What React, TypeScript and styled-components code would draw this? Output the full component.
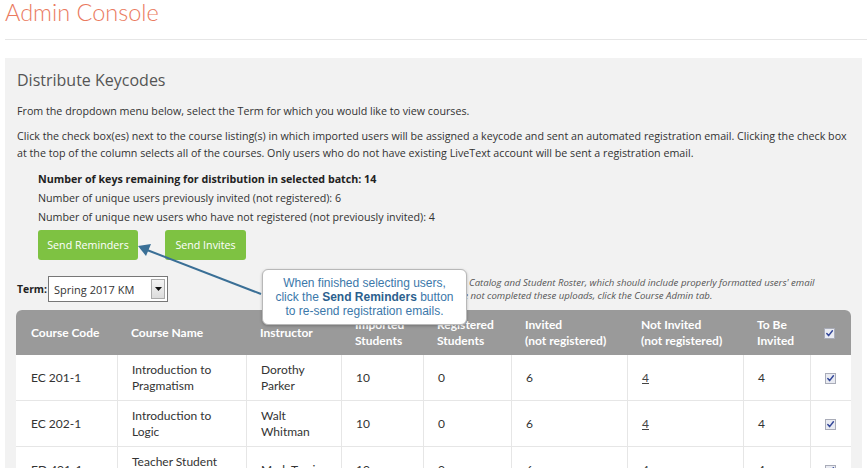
import styled, { createGlobalStyle } from "styled-components";

const GlobalStyle = createGlobalStyle`
  html, body {
    margin: 0;
    padding: 0;
    background: #ffffff;
    overflow: hidden;
  }
  body {
    font-family: "Open Sans", "Liberation Sans", sans-serif;
    color: #333333;
  }
`;

interface CourseRow {
  code: string;
  name: string;
  instructor: string;
  imported: number;
  registered: number;
  invited: number;
  notInvited: number;
  toBeInvited: number;
}

const ROWS: CourseRow[] = [
  {
    code: "EC 201-1",
    name: "Introduction to Pragmatism",
    instructor: "Dorothy Parker",
    imported: 10,
    registered: 0,
    invited: 6,
    notInvited: 4,
    toBeInvited: 4,
  },
  {
    code: "EC 202-1",
    name: "Introduction to Logic",
    instructor: "Walt Whitman",
    imported: 10,
    registered: 0,
    invited: 6,
    notInvited: 4,
    toBeInvited: 4,
  },
  {
    code: "ED 401-1",
    name: "Teacher Student Teaching",
    instructor: "Mark Twain",
    imported: 10,
    registered: 0,
    invited: 6,
    notInvited: 4,
    toBeInvited: 4,
  },
];

const COLUMN_WIDTHS = [101, 129, 95, 82, 88, 116, 116, 67, 41];

function CheckMark() {
  return (
    <Check>
      <svg width="9" height="9" viewBox="0 0 9 9">
        <path
          d="M1.8 4.6 L3.6 6.6 L7.4 1.8"
          fill="none"
          stroke="#34489a"
          strokeWidth="1.5"
          strokeLinecap="round"
          strokeLinejoin="round"
        />
      </svg>
    </Check>
  );
}

export default function App(): JSX.Element {
  return (
    <Page>
      <GlobalStyle />
      <Title>Admin Console</Title>
      <Rule />
      <Panel>
        <Heading>Distribute Keycodes</Heading>
        <Text>
          From the dropdown menu below, select the Term for which you would like
          to view courses.
        </Text>
        <Text>
          Click the check box(es) next to the course listing(s) in which
          imported users will be assigned a keycode and sent an automated
          registration email. Clicking the check box
          <br />
          at the top of the column selects all of the courses. Only users who
          do not have existing LiveText account will be sent a registration
          email.
        </Text>
        <Stats>
          <StatLine $bold>
            Number of keys remaining for distribution in selected batch: 14
          </StatLine>
          <StatLine>
            Number of unique users previously invited (not registered): 6
          </StatLine>
          <StatLine>
            Number of unique new users who have not registered (not previously
            invited): 4
          </StatLine>
          <Buttons>
            <GreenButton $width={100}>Send Reminders</GreenButton>
            <GreenButton $width={81}>Send Invites</GreenButton>
          </Buttons>
        </Stats>
        <TermRow>
          <TermLabel>Term:</TermLabel>
          <TermSelect>
            <span>Spring 2017 KM</span>
            <SelectArrow>
              <svg width="7" height="4" viewBox="0 0 7 4">
                <path d="M0 0 L7 0 L3.5 4 Z" fill="#111" />
              </svg>
            </SelectArrow>
          </TermSelect>
          <Note>
            Prior to distributing, upload the Course Catalog and Student
            Roster, which should include properly formatted users' email
            <br />
            addresses for every student. If you have not completed these
            uploads, click the Course Admin tab.
          </Note>
        </TermRow>
        <Table>
          <colgroup>
            {COLUMN_WIDTHS.map((w, i) => (
              <col key={i} style={{ width: w }} />
            ))}
          </colgroup>
          <thead>
            <tr>
              <Th>Course Code</Th>
              <Th>Course Name</Th>
              <Th>Instructor</Th>
              <Th>
                Imported
                <br />
                Students
              </Th>
              <Th>
                Registered
                <br />
                Students
              </Th>
              <Th>
                Invited
                <br />
                (not registered)
              </Th>
              <Th>
                Not Invited
                <br />
                (not registered)
              </Th>
              <Th>
                To Be
                <br />
                Invited
              </Th>
              <Th>
                <CheckMark />
              </Th>
            </tr>
          </thead>
          <tbody>
            {ROWS.map((row) => (
              <tr key={row.code}>
                <Td>{row.code}</Td>
                <Td>{row.name}</Td>
                <Td>{row.instructor}</Td>
                <Td>{row.imported}</Td>
                <Td>{row.registered}</Td>
                <Td>{row.invited}</Td>
                <Td>
                  <CountLink>{row.notInvited}</CountLink>
                </Td>
                <Td>{row.toBeInvited}</Td>
                <Td>
                  <CheckMark />
                </Td>
              </tr>
            ))}
          </tbody>
        </Table>
      </Panel>

      <Callout>
        When finished selecting users,
        <br />
        click the <strong>Send Reminders</strong> button
        <br />
        to re-send registration emails.
      </Callout>
      <ArrowLayer width="867" height="468" viewBox="0 0 867 468">
        <line
          x1="261"
          y1="294"
          x2="147"
          y2="250"
          stroke="#3a6f96"
          strokeWidth="2"
        />
        <path d="M138 246 L151 244 L146 256 Z" fill="#3a6f96" />
      </ArrowLayer>
    </Page>
  );
}

const Page = styled.div`
  position: relative;
  width: 867px;
  height: 468px;
  overflow: hidden;
`;

const Title = styled.h1`
  margin: -2px 0 0 5px;
  font-family: Lato, "Open Sans", sans-serif;
  font-weight: 300;
  font-size: 23.5px;
  line-height: 28px;
  color: #ea7a60;
`;

const Rule = styled.div`
  margin: 13px 0 0 5px;
  height: 1px;
  background: #e6e6e6;
`;

const Panel = styled.section`
  margin: 18px 5px 0 5px;
  padding: 10px 11px 0 11px;
  background: #f2f2f2;
  height: 420px;
`;

const Heading = styled.h2`
  margin: 0 0 11px 1px;
  font-family: "Open Sans", sans-serif;
  font-weight: 400;
  font-size: 16px;
  line-height: 24px;
  color: #555555;
`;

const Text = styled.p`
  margin: 0 0 8px 1px;
  font-size: 10.7px;
  line-height: 17px;
  color: #333333;
  white-space: nowrap;
`;

const Stats = styled.div`
  margin: 7px 0 0 22px;
`;

const StatLine = styled.div<{ $bold?: boolean }>`
  font-size: 10.7px;
  line-height: 19px;
  font-weight: ${(p) => (p.$bold ? 700 : 400)};
  color: ${(p) => (p.$bold ? "#222" : "#333")};
`;

const Buttons = styled.div`
  display: flex;
  gap: 27px;
  margin-top: 3px;
`;

const GreenButton = styled.button<{ $width: number }>`
  width: ${(p) => p.$width}px;
  height: 30px;
  border: none;
  border-radius: 3px;
  background: #7ec242;
  color: #ffffff;
  font-family: "Open Sans", sans-serif;
  font-size: 10.7px;
  padding: 0;
`;

const TermRow = styled.div`
  display: flex;
  align-items: center;
  margin: 15px 0 0 1px;
  height: 28px;
`;

const TermLabel = styled.span`
  font-size: 10.4px;
  font-weight: 700;
  color: #222;
  margin-right: 1px;
`;

const TermSelect = styled.div`
  box-sizing: border-box;
  width: 120px;
  height: 26px;
  display: flex;
  align-items: center;
  justify-content: space-between;
  padding: 0 2px 0 5px;
  background: #ffffff;
  border: 1px solid #777;
  font-size: 11px;
  color: #333;
`;

const SelectArrow = styled.span`
  box-sizing: border-box;
  width: 14px;
  height: 20px;
  display: flex;
  align-items: center;
  justify-content: center;
  background: linear-gradient(#f4f4f4, #dcdcdc);
  border: 1px solid #aaa;
`;

const Note = styled.div`
  margin-left: 133px;
  font-style: italic;
  font-size: 9.6px;
  line-height: 13px;
  color: #555;
  white-space: nowrap;
`;

const Table = styled.table`
  margin-top: 7px;
  width: 835px;
  table-layout: fixed;
  border-collapse: separate;
  border-spacing: 0;
  font-family: Lato, "Open Sans", sans-serif;
  font-size: 12px;
  background: #ffffff;
  border-radius: 6px 6px 0 0;
`;

const Th = styled.th`
  height: 45px;
  padding: 0 14px;
  background: #9a9a9a;
  color: #ffffff;
  font-weight: 700;
  text-align: left;
  line-height: 16px;
  vertical-align: middle;

  &:first-child {
    border-top-left-radius: 6px;
    padding-left: 15px;
  }
  &:last-child {
    border-top-right-radius: 6px;
  }
`;

const Td = styled.td`
  height: 45px;
  padding: 0 14px;
  color: #333;
  line-height: 16px;
  vertical-align: middle;
  border-bottom: 1px solid #e6e6e6;
  border-left: 1px solid #e6e6e6;

  &:first-child {
    border-left: none;
    padding-left: 15px;
  }
`;

const CountLink = styled.span`
  text-decoration: underline;
  color: #444;
`;

const Check = styled.span`
  box-sizing: border-box;
  display: inline-flex;
  align-items: center;
  justify-content: center;
  width: 11px;
  height: 11px;
  border: 1px solid #a9acb8;
  background: #e9ebf2;
  vertical-align: middle;
`;

const Callout = styled.div`
  position: absolute;
  left: 262px;
  top: 269px;
  box-sizing: border-box;
  width: 205px;
  height: 56px;
  padding-top: 6px;
  background: #ffffff;
  border: 1px solid #b8b8b8;
  border-radius: 6px;
  box-shadow: 0 1px 3px rgba(0, 0, 0, 0.25);
  text-align: center;
  font-family: "Liberation Sans", Arial, sans-serif;
  font-size: 12px;
  line-height: 14px;
  color: #3b78aa;

  strong {
    color: #2c5f8e;
  }
`;

const ArrowLayer = styled.svg`
  position: absolute;
  left: 0;
  top: 0;
  pointer-events: none;
`;
